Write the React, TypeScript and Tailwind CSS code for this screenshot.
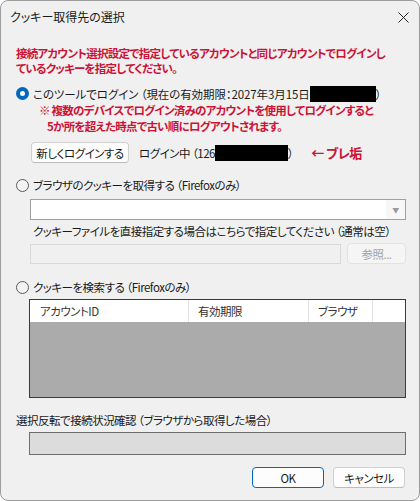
import React from "react";

const font =
  "[font-family:'Noto_Sans_CJK_JP','Noto_Sans',sans-serif] [font-feature-settings:'palt']";

function Radio({ checked }: { checked?: boolean }) {
  if (checked) {
    return (
      <span className="w-[13px] h-[13px] rounded-full bg-[#0067c0] flex items-center justify-center shrink-0">
        <span className="w-[5px] h-[5px] rounded-full bg-white" />
      </span>
    );
  }
  return (
    <span className="w-[13px] h-[13px] rounded-full border border-[#5a5a5a] bg-[#f3f3f3] shrink-0" />
  );
}

function Btn({
  children,
  primary,
  className = "",
}: {
  children: React.ReactNode;
  primary?: boolean;
  className?: string;
}) {
  return (
    <div
      className={
        "h-[21px] flex items-center justify-center rounded-[4px] bg-[#fdfdfd] border text-[#1b1b1b] whitespace-nowrap " +
        (primary ? "border-[#0067c0] " : "border-[#d0d0d0] border-b-[#bcbcbc] ") +
        className
      }
    >
      {children}
    </div>
  );
}

export default function App() {
  return (
    <div className={"w-[420px] h-[501px] bg-white " + font}>
      <div className="w-full h-full bg-[#f0f0f0] border border-[#9c9c9c] rounded-[8px] overflow-hidden flex flex-col">
        {/* title bar */}
        <div className="h-[32px] flex items-center justify-between pl-[9px] pr-[9px] shrink-0">
          <span className="text-[12px] text-[#1a1a1a]">クッキー取得先の選択</span>
          <svg width="11" height="11" viewBox="0 0 11 11" className="mr-[1px]">
            <path d="M0.5 0.5 L10.5 10.5 M10.5 0.5 L0.5 10.5" stroke="#222" strokeWidth="1" />
          </svg>
        </div>

        <div className="pl-[15px] pr-[13px] flex flex-col text-[11.5px] tracking-[-0.5px] leading-[16px] text-[#1a1a1a] whitespace-nowrap">
          <div className="mt-[13px] text-[#cc1236] font-bold leading-[15px] tracking-[-0.75px]">
            接続アカウント選択設定で指定しているアカウントと同じアカウントでログインし
            <br />
            ているクッキーを指定してください。
          </div>

          {/* option 1 */}
          <div className="mt-[9px] h-[17px] flex items-center">
            <Radio checked />
            <span className="ml-[4px] tracking-[-0.1px]">
              このツールでログイン （現在の有効期限：2027年3月15日
            </span>
            <span className="inline-block w-[66px] h-[16px] bg-black" />
            <span>）</span>
          </div>
          <div className="pl-[23px] text-[#cc1236] font-bold tracking-[-0.75px]">
            ※ 複数のデバイスでログイン済みのアカウントを使用してログインすると
            <br />
            <span className="pl-[8px]">5か所を超えた時点で古い順にログアウトされます。</span>
          </div>
          <div className="mt-[8px] flex items-center">
            <Btn className="ml-[15px] w-[98px]">新しくログインする</Btn>
            <span className="ml-[10px]">ログイン中 （126</span>
            <span className="inline-block w-[73px] h-[16px] bg-black" />
            <span>）</span>
            <span className="ml-[18px] text-[#cc1236] font-bold text-[13px]">← ブレ垢</span>
          </div>

          {/* option 2 */}
          <div className="mt-[13px] h-[18px] flex items-center">
            <Radio />
            <span className="ml-[4px]">ブラウザのクッキーを取得する （Firefoxのみ）</span>
          </div>
          <div className="mt-[5px] ml-[14px] h-[21px] bg-white border border-[#a0a0a0] flex justify-end">
            <div className="w-[19px] h-full bg-[#f7f7f7] flex items-center justify-center text-[7px] text-[#9a9a9a]">
              ▼
            </div>
          </div>
          <div className="mt-[3px] ml-[17px]">
            クッキーファイルを直接指定する場合はこちらで指定してください （通常は空）
          </div>
          <div className="mt-[4px] ml-[14px] flex items-center gap-[6px]">
            <div className="w-[311px] h-[20px] bg-[#f0f0f0] border border-[#d9d9d9]" />
            <div className="w-[59px] h-[21px] rounded-[4px] bg-[#f5f5f5] border border-[#e2e2e2] flex items-center justify-center text-[#a3a3a3]">
              参照...
            </div>
          </div>

          {/* option 3 */}
          <div className="mt-[14px] h-[18px] flex items-center">
            <Radio />
            <span className="ml-[4px]">クッキーを検索する （Firefoxのみ）</span>
          </div>
          <div className="mt-[3px] ml-[13px] h-[99px] border border-[#3a3a3a] bg-[#ababab] flex flex-col">
            <div className="h-[22px] bg-white flex items-center text-[#333]">
              <div className="w-[159px] h-full flex items-center pl-[10px] border-r border-[#e5e5e5]">
                アカウントID
              </div>
              <div className="w-[120px] h-full flex items-center pl-[9px] border-r border-[#e5e5e5]">
                有効期限
              </div>
              <div className="w-[64px] h-full flex items-center pl-[9px] border-r border-[#e5e5e5]">
                ブラウザ
              </div>
            </div>
          </div>

          <div className="mt-[14px]">
            選択反転で接続状況確認 （ブラウザから取得した場合）
          </div>
          <div className="mt-[4px] ml-[13px] h-[23px] bg-[#dcdcdc] border border-[#6e6e6e]" />

          <div className="mt-[12px] flex justify-end gap-[9px] pr-[1px]">
            <Btn primary className="w-[72px]">OK</Btn>
            <Btn className="w-[72px]">キャンセル</Btn>
          </div>
        </div>
      </div>
    </div>
  );
}
